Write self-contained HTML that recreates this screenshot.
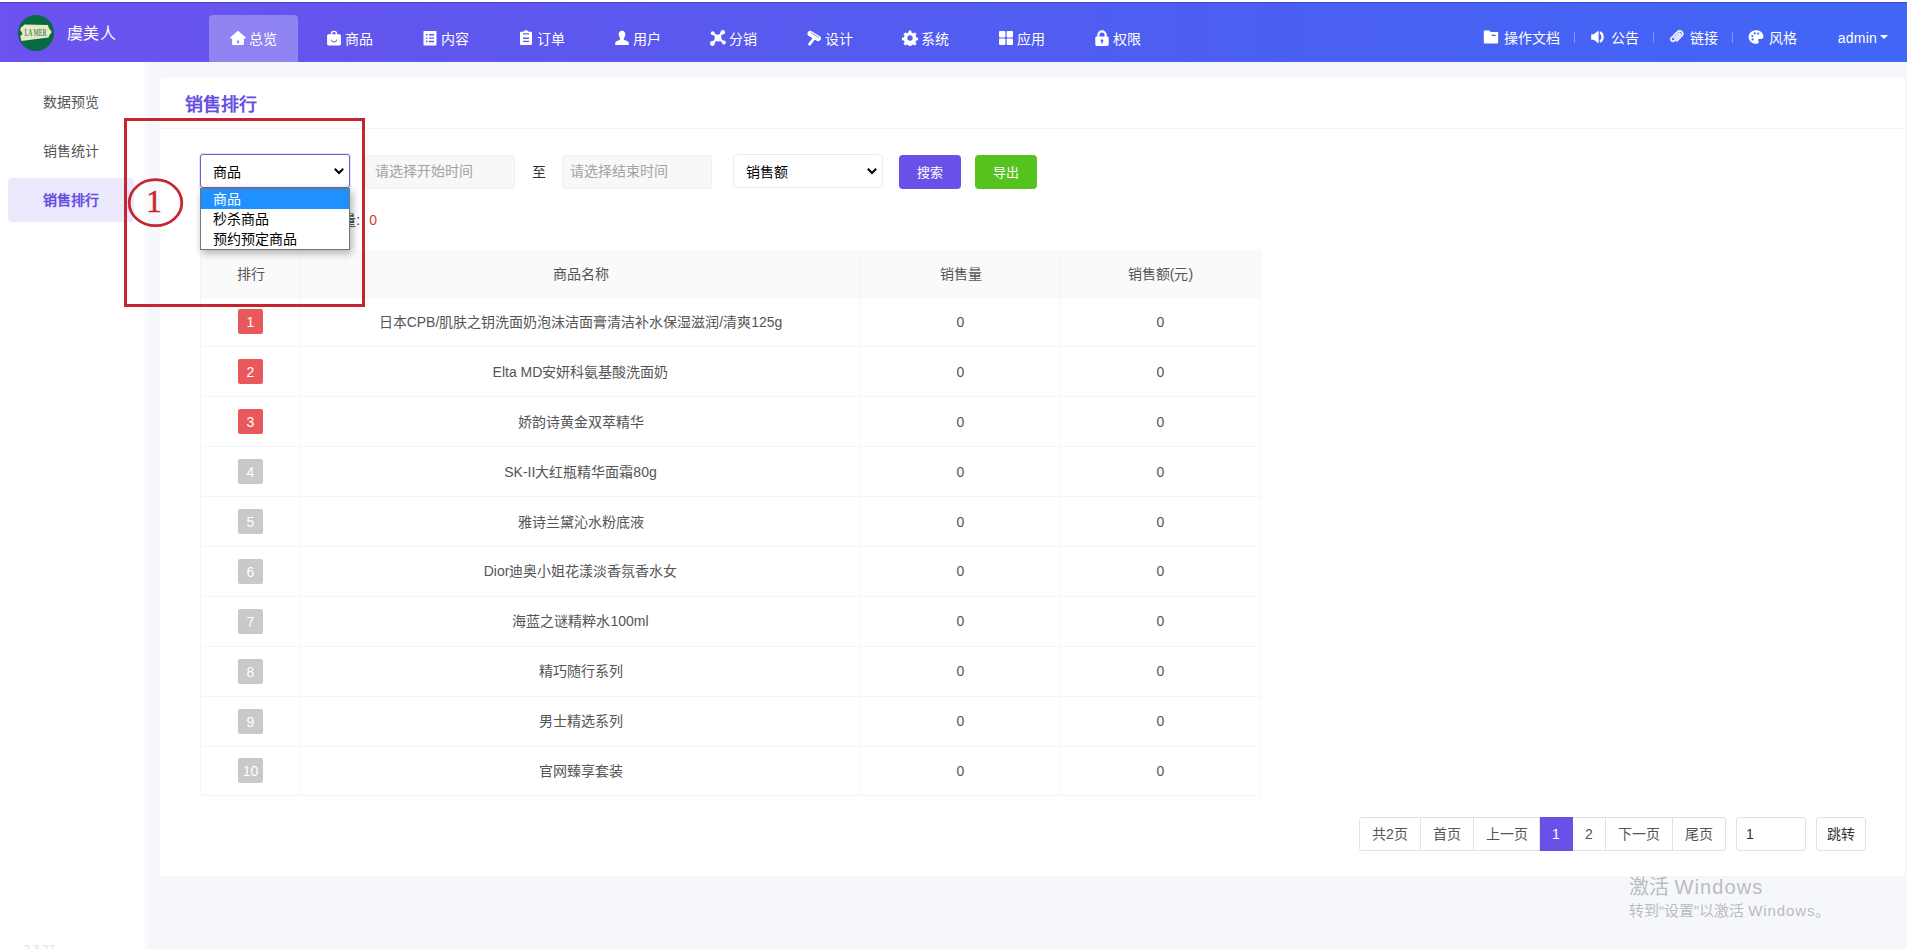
<!DOCTYPE html>
<html lang="zh-CN">
<head>
<meta charset="utf-8">
<title>销售排行</title>
<style>
*{box-sizing:border-box;margin:0;padding:0}
html,body{width:1907px;height:949px;overflow:hidden}
body{font-family:"Liberation Sans",sans-serif;font-size:14px;color:#5c5c5c;background:#f6f7fb;position:relative}
a{text-decoration:none;color:inherit}
ul{list-style:none}

/* ---------- header ---------- */
.topstrip{position:absolute;left:0;top:0;width:1907px;height:2px;background:#fdfcff}
.header{position:absolute;left:0;top:2px;width:1907px;height:60px;box-shadow:inset 0 1px 0 rgba(40,30,120,.35);background:linear-gradient(90deg,#6c52ee 0%,#5a59ef 35%,#4b5ff2 65%,#4166f6 100%);color:#fff}
.logo{position:absolute;left:18px;top:13px;width:36px;height:36px;border-radius:50%;background:#066b42;overflow:hidden}
.brand{position:absolute;left:67px;top:19.500px;letter-spacing:.4px;font-size:16px;line-height:24px;color:#fff}
.nav{position:absolute;left:209px;top:13px;height:47px;display:flex}
.nav li{width:89px;height:47px;margin-right:7px;border-radius:4px 4px 0 0;display:flex;align-items:center;justify-content:center;font-weight:500;font-size:14px;color:#fff}
.nav li.on{background:rgba(255,255,255,.28)}
.nav li svg{width:16px;height:16px;margin-right:4px;fill:#fff;flex:none;position:relative;top:-.5px}
.nav li span{position:relative;top:-.5px;left:-.5px}
.tools{position:absolute;right:0;top:13px;height:47px;display:flex;align-items:center;font-weight:500;font-size:14px;color:#fff}
.tools .t{display:flex;align-items:center}
.tools .t span{position:relative;top:-1.500px}
.tools svg{width:16px;height:16px;fill:#fff;margin-right:6px;position:relative;top:-2px;left:.5px}
.tools .sep{width:1px;height:11px;background:rgba(255,255,255,.32);margin:0 14px;position:relative;top:-1.500px}
.tools .adm{font-weight:normal;margin-left:40.500px;margin-right:19px;display:flex;align-items:center;letter-spacing:.2px;position:relative;top:-1px}
.tools .adm i{display:inline-block;margin-left:3px;margin-top:-2px;border:4px solid transparent;border-top-color:#fff;border-bottom-width:0}

/* ---------- sidebar ---------- */
.side{position:absolute;left:0;top:62px;width:143px;height:887px;background:#fff}
.side:after{content:"";position:absolute;left:143px;top:0;width:6px;height:100%;background:linear-gradient(90deg,#fff,#f6f7fb)}
.side li{position:absolute;left:8px;width:126px;height:44px;line-height:44px;padding-left:35px;font-size:14px;color:#555;border-radius:4px}
.side li.on{background:#ece9fd;color:#6650e2;font-weight:bold}

/* ---------- card ---------- */
.card{position:absolute;left:160px;top:78px;width:1745px;height:798px;background:#fff;border-radius:3px}
.card h2{position:absolute;left:25px;top:14px;font-size:18px;line-height:26px;color:#6650e0;font-weight:bold}
.card .hr{position:absolute;left:0;top:50px;width:100%;height:1px;background:#f5f5f6}

/* ---------- filter ---------- */
.filter{position:absolute;left:0;top:0}
.filter>div{position:absolute}
.sel{width:150px;height:34px;top:76px;border:1px solid #ebebeb;border-radius:4px;background:#fff;color:#000;font-size:14px;line-height:35px;padding-left:12px}
.sel svg{position:absolute;right:4px;top:10px;width:12px;height:12px}
.sel.focus{height:33.500px;border:1px solid #6f64c4;box-shadow:0 0 0 1px #e1ddfb;border-radius:3px}
.inp{top:77px;width:150px;height:34px;border:1px solid #f0f0f0;border-radius:3px;background:#f8f8f8;color:#a3a3a3;font-size:14px;line-height:31px;padding-left:8.500px}
.to{top:77px;left:355px;width:47px;height:34px;line-height:34px;text-align:center;color:#333;font-size:14px}
.btn{top:77px;height:34px;line-height:35px;color:#fff;font-size:13px;text-align:center;border-radius:4px}
.btn.s{left:739px;width:62px;background:#6950e6}
.btn.e{left:815px;width:62px;background:#55c21e}
.total{position:absolute;left:0;width:217px;text-align:right;top:132px;font-size:14px;line-height:20px;color:#333;white-space:nowrap}
.total b{font-weight:normal;color:#d63a22;margin-left:9px}
.drop{position:absolute;left:40px;top:110px;width:150px;height:62px;background:#fff;border:1px solid #767676;box-shadow:2px 3px 8px rgba(0,0,0,.32);z-index:5;color:#000;font-size:14px}
.drop div{height:20px;line-height:20px;padding-left:12px}
.drop div.hl{background:#1e90ff;color:#fff}

/* ---------- table ---------- */
table{position:absolute;left:40px;top:172px;width:1060px;border-collapse:collapse;table-layout:fixed;font-size:14px;color:#555}
th{height:47px;background:#fafafa;font-weight:normal;color:#555;border:1px solid #f5f5f5;border-top:none}
td{height:49.9px;text-align:center;border:1px solid #f5f5f5}
td:nth-child(2){padding-bottom:2px}
th{padding-bottom:1px}
.rk{display:inline-block;font-style:normal;width:25px;height:25px;line-height:26.500px;border-radius:2px;color:#fff;background:#c9c9c9;font-size:14px;vertical-align:middle}
.rk.r{background:#e9595c}

/* ---------- pager ---------- */
.pager{position:absolute;left:1199px;top:739px;height:34px;display:flex;font-size:14px;color:#555}
.pager span{height:34px;line-height:32px;border:1px solid #e2e2e2;border-left:none;text-align:center;background:#fff}
.pager span:first-child{border-left:1px solid #e2e2e2;border-radius:3px 0 0 3px}
.pager span.last{border-radius:0 3px 3px 0}
.pager span.cur{background:#6950e6;border-color:#6950e6;color:#fff}
.pager .pin{width:70px;margin-left:10px;border:1px solid #e2e2e2!important;border-radius:3px;text-align:left;padding-left:9px;color:#333}
.pager .go{width:50px;margin-left:10px;border:1px solid #e2e2e2!important;border-radius:3px;color:#333}

/* ---------- overlays ---------- */
.wm{position:absolute;left:1629px;top:874px;color:#b9bcc2;white-space:nowrap}
.wm .a{font-size:20px;line-height:26px}
.wm .b{font-size:15px;line-height:20px;margin-top:1px}
.ver{position:absolute;left:24px;top:944px;font-size:11px;line-height:11px;color:#dcdcdc}
.anno{position:absolute;left:0;top:0;width:1907px;height:949px;z-index:9;pointer-events:none}
</style>
</head>
<body>
<div class="topstrip"></div>

<div class="header">
  <div class="logo"><svg viewBox="0 0 36 36" width="36" height="36"><path d="M6.700 9.600 29.900 9.900 30.900 13.100 33.800 16.900 31.200 20.700 30.600 22.600 16.600 24.200 3.500 26.100 2.200 21.300 4.500 18.800 2.200 15 2.900 12.400z" fill="#e6e8c6"/><text x="17.600" y="21" text-anchor="middle" font-family="Liberation Serif,serif" font-weight="bold" font-size="10.500" fill="#2c7a55" fill-opacity=".85" textLength="22" lengthAdjust="spacingAndGlyphs">LA MER</text></svg></div>
  <div class="brand">虞美人</div>
  <ul class="nav">
    <li class="on"><svg viewBox="0 0 16 16"><path fill-rule="evenodd" d="M8 .9c.3 0 .5.1.7.3l7 6.3c.4.4.1 1-.4 1h-1.400v5.500c0 .5-.4.9-.9.9H3c-.5 0-.9-.4-.9-.9V8.500H.7c-.5 0-.8-.6-.4-1l7-6.300c.2-.2.4-.3.700-.3zM6.900 10.400v2.800h2.200v-2.800z"/></svg><span>总览</span></li>
    <li><svg viewBox="0 0 16 16"><path fill-rule="evenodd" d="M4.800 4.300v-.4a3.200 3.200 0 0 1 6.400 0v.4h2.300c.8 0 1.400.6 1.400 1.400V14c0 .8-.6 1.400-1.400 1.400H2.500c-.8 0-1.400-.6-1.400-1.400V5.700c0-.8.6-1.400 1.400-1.400zm1.300 0h3.800v-.4a1.900 1.900 0 0 0-3.800 0zM4.600 9.600c.5 1.900 1.800 2.900 3.400 2.900s2.900-1 3.400-2.900l-.9-.2c-.4 1.400-1.300 2.200-2.500 2.200s-2.100-.8-2.500-2.200z"/></svg><span>商品</span></li>
    <li><svg viewBox="0 0 16 16"><path fill-rule="evenodd" d="M2.500 1h11c.6 0 1 .4 1 1v12.400c0 .6-.4 1-1 1h-11c-.6 0-1-.4-1-1V2c0-.6.4-1 1-1zm1.500 3v1.400h1.600V4zm3 0v1.400h5V4zM4 7.400v1.400h1.600V7.400zm3 0v1.400h5V7.400zM4 10.800v1.400h1.600v-1.400zm3 0v1.400h5v-1.400z"/></svg><span>内容</span></li>
    <li><svg viewBox="0 0 16 16"><path fill-rule="evenodd" d="M5.500 1.800C5.700.8 6.700.2 8 .2s2.300.6 2.500 1.600H13c.6 0 1 .4 1 1V14c0 .6-.4 1-1 1H3c-.6 0-1-.4-1-1V2.800c0-.6.4-1 1-1zM5 3.200v1.300h6V3.200zm0 4.300v1.400h6V7.500zm0 3.200V12h6v-1.300z"/></svg><span>订单</span></li>
    <li><svg viewBox="0 0 16 16"><path d="M8 .8c2 0 3.300 1.500 3.300 3.700 0 1.500-.6 2.900-1.500 3.700v.9c0 .5.300.8.800 1l2.700 1.100c.9.400 1.500 1.100 1.500 2.100V15H1.200v-1.700c0-1 .6-1.700 1.500-2.100l2.700-1.100c.5-.2.8-.5.800-1v-.9C5.300 7.400 4.700 6 4.700 4.500 4.700 2.300 6 .8 8 .8z"/></svg><span>用户</span></li>
    <li><svg viewBox="0 0 16 16"><path d="M2.800 3.200 13.800 12.600M12.700 2.300 2.300 13.600" stroke="#fff" stroke-width="2.200" fill="none"/><circle cx="8" cy="7.900" r="3.500"/><circle cx="2.800" cy="3.200" r="2"/><circle cx="12.800" cy="2.300" r="2.300"/><circle cx="2.400" cy="13.500" r="2.400"/><circle cx="13.900" cy="12.600" r="2"/></svg><span>分销</span></li>
    <li><svg viewBox="0 0 16 16"><path d="M4.200 3.600 12.200 8.400" stroke="#fff" stroke-width="5.400" stroke-linecap="round" fill="none"/><path d="M8 8.500 3.600 14.200" stroke="#fff" stroke-width="2.800" stroke-linecap="round" fill="none"/><path d="M5.200 2.900 12.600 7.300" stroke="#7d7df2" stroke-width=".9" stroke-linecap="round" fill="none"/></svg><span>设计</span></li>
    <li><svg viewBox="0 0 16 16"><path fill-rule="evenodd" d="M6.800.5h2.400l.4 2c.5.200 1 .4 1.400.7l1.900-.8 1.700 1.700-1.100 1.700c.3.500.5 1 .6 1.500l2 .5v2.400l-2 .4c-.1.500-.3 1-.6 1.500l1.100 1.700-1.700 1.700-1.700-1.100c-.5.300-1 .5-1.500.6l-.5 2H6.800l-.4-2c-.5-.1-1-.3-1.500-.6l-1.700 1.100-1.700-1.700 1.100-1.700c-.3-.5-.5-1-.6-1.500l-2-.4V7.800l2-.5c.1-.5.3-1 .6-1.500L1.500 4.100l1.700-1.700 1.900.8c.4-.3.900-.5 1.400-.7zM8 5.300a2.700 2.700 0 1 0 0 5.400 2.700 2.700 0 0 0 0-5.400z"/></svg><span>系统</span></li>
    <li><svg viewBox="0 0 16 16"><rect x="1" y="1" width="6.400" height="6.400" rx="1"/><rect x="8.600" y="1" width="6.400" height="6.400" rx="1"/><rect x="1" y="8.600" width="6.400" height="6.400" rx="1"/><rect x="8.600" y="8.600" width="6.400" height="6.400" rx="1"/></svg><span>应用</span></li>
    <li><svg viewBox="0 0 16 16"><path fill-rule="evenodd" d="M3.300 6.400V5a4.700 4.700 0 0 1 9.400 0v1.400h.6c.8 0 1.400.6 1.400 1.400v6.700c0 .8-.6 1.400-1.400 1.400H2.700c-.8 0-1.400-.6-1.400-1.400V7.800c0-.8.6-1.400 1.400-1.400zm2.100 0h5.200V5a2.600 2.600 0 0 0-5.200 0zM8 9.300a1.400 1.400 0 0 0-.7 2.600v1.500h1.400v-1.500A1.400 1.400 0 0 0 8 9.300z"/></svg><span>权限</span></li>
  </ul>
  <div class="tools">
    <div class="t"><svg viewBox="0 0 16 16"><path fill-rule="evenodd" d="M1.800 1.500h4.400l1.500 1.600h6.500c.6 0 1 .4 1 1v9.400c0 .6-.4 1-1 1H1.800c-.6 0-1-.4-1-1v-11c0-.6.4-1 1-1zM8.600 5.700V7h4V5.700z"/></svg><span>操作文档</span></div><div class="sep"></div>
    <div class="t"><svg viewBox="0 0 16 16"><path d="M1.200 5.200h2.600L8.600 1.400v13.200L3.800 10.800H1.200z"/><path d="M10 3.300c1.700 1 2.600 2.700 2.600 4.700s-.9 3.700-2.600 4.700" fill="none" stroke="#fff" stroke-width="2.300"/></svg><span>公告</span></div><div class="sep"></div>
    <div class="t"><svg viewBox="0 0 16 16"><path d="M13.200 2.300c-1.400-1.400-3.600-1.400-5 0L2.100 8.400c-1 1-1 2.700 0 3.700s2.700 1 3.700 0l5.600-5.600c.6-.6.6-1.600 0-2.200-.6-.6-1.600-.6-2.200 0L4.600 8.900l.8.800L10 5.100c.2-.2.400-.2.600 0s.2.400 0 .6L5 11.300c-.6.600-1.500.6-2.100 0s-.6-1.500 0-2.100L9 3.100c.9-.9 2.500-.9 3.400 0s.9 2.500 0 3.400L7 11.900l.8.800 5.400-5.400c1.400-1.400 1.400-3.600 0-5z" stroke="#fff" stroke-width=".7"/></svg><span>链接</span></div><div class="sep"></div>
    <div class="t"><svg viewBox="0 0 16 16"><path fill-rule="evenodd" d="M8 1.200c4.100 0 7.400 2.700 7.400 6.200 0 1.700-1.300 2.700-2.900 2.700h-1.300c-.7 0-1.100.5-1.100 1 0 .8.600 1 .6 1.900 0 1-.9 1.800-2.400 1.800C4 14.800.6 11.800.6 8S3.900 1.200 8 1.200zM4.300 6a1.100 1.100 0 1 0 0 2.200 1.100 1.100 0 0 0 0-2.200zm2.400-2.700a1.100 1.100 0 1 0 0 2.200 1.100 1.100 0 0 0 0-2.200zm3.500.2a1.100 1.100 0 1 0 0 2.200 1.100 1.100 0 0 0 0-2.200zM4.600 9.300a1.100 1.100 0 1 0 0 2.200 1.100 1.100 0 0 0 0-2.200z"/></svg><span>风格</span></div>
    <div class="adm">admin<i></i></div>
  </div>
</div>

<ul class="side">
  <li style="top:18px">数据预览</li>
  <li style="top:67px">销售统计</li>
  <li class="on" style="top:116px">销售排行</li>
</ul>

<div class="card">
  <h2>销售排行</h2>
  <div class="hr"></div>

  <div class="filter">
    <div class="sel focus" style="left:40px">商品<svg viewBox="0 0 12 12"><path d="M1.800 3.800 6 8 10.200 3.800" fill="none" stroke="#000" stroke-width="2"/></svg></div>
    <div class="inp" style="left:205px">请选择开始时间</div>
    <div class="to">至</div>
    <div class="inp" style="left:402px;padding-left:7px">请选择结束时间</div>
    <div class="sel" style="left:573px">销售额<svg viewBox="0 0 12 12"><path d="M1.800 3.800 6 8 10.200 3.800" fill="none" stroke="#000" stroke-width="2"/></svg></div>
    <div class="btn s">搜索</div>
    <div class="btn e">导出</div>
  </div>
  <div class="total">总销售量:<b>0</b></div>
  <div class="drop"><div class="hl">商品</div><div>秒杀商品</div><div>预约预定商品</div></div>

  <table>
    <colgroup><col style="width:100px"><col style="width:560px"><col style="width:200px"><col style="width:200px"></colgroup>
    <thead><tr><th>排行</th><th>商品名称</th><th>销售量</th><th>销售额(元)</th></tr></thead>
    <tbody>
      <tr><td><i class="rk r">1</i></td><td>日本CPB/肌肤之钥洗面奶泡沫洁面膏清洁补水保湿滋润/清爽125g</td><td>0</td><td>0</td></tr>
      <tr><td><i class="rk r">2</i></td><td>Elta MD安妍科氨基酸洗面奶</td><td>0</td><td>0</td></tr>
      <tr><td><i class="rk r">3</i></td><td>娇韵诗黄金双萃精华</td><td>0</td><td>0</td></tr>
      <tr><td><i class="rk">4</i></td><td>SK-II大红瓶精华面霜80g</td><td>0</td><td>0</td></tr>
      <tr><td><i class="rk">5</i></td><td>雅诗兰黛沁水粉底液</td><td>0</td><td>0</td></tr>
      <tr><td><i class="rk">6</i></td><td>Dior迪奥小姐花漾淡香氛香水女</td><td>0</td><td>0</td></tr>
      <tr><td><i class="rk">7</i></td><td>海蓝之谜精粹水100ml</td><td>0</td><td>0</td></tr>
      <tr><td><i class="rk">8</i></td><td>精巧随行系列</td><td>0</td><td>0</td></tr>
      <tr><td><i class="rk">9</i></td><td>男士精选系列</td><td>0</td><td>0</td></tr>
      <tr><td><i class="rk">10</i></td><td>官网臻享套装</td><td>0</td><td>0</td></tr>
    </tbody>
  </table>

  <div class="pager">
    <span style="width:62px">共2页</span><span style="width:53px">首页</span><span style="width:66px">上一页</span><span class="cur" style="width:33px">1</span><span style="width:33px">2</span><span style="width:67px">下一页</span><span class="last" style="width:53px">尾页</span>
    <span class="pin">1</span><span class="go">跳转</span>
  </div>
</div>

<svg class="anno" viewBox="0 0 1907 949"><rect x="125.500" y="119.500" width="238" height="186" fill="none" stroke="#c8242f" stroke-width="3"/><ellipse cx="155.500" cy="202.700" rx="26.300" ry="23" fill="none" stroke="#c8242f" stroke-width="2.800"/><text x="154" y="211.700" text-anchor="middle" font-family="Liberation Serif,serif" font-size="31" fill="#c8242f" stroke="#c8242f" stroke-width=".5">1</text></svg>
<div class="wm"><div class="a">激活 <span style="letter-spacing:1.100px">Windows</span></div><div class="b">转到“设置”以激活 <span style="letter-spacing:.9px">Windows</span>。</div></div>
<div class="ver">2.3.27</div>

</body>
</html>
